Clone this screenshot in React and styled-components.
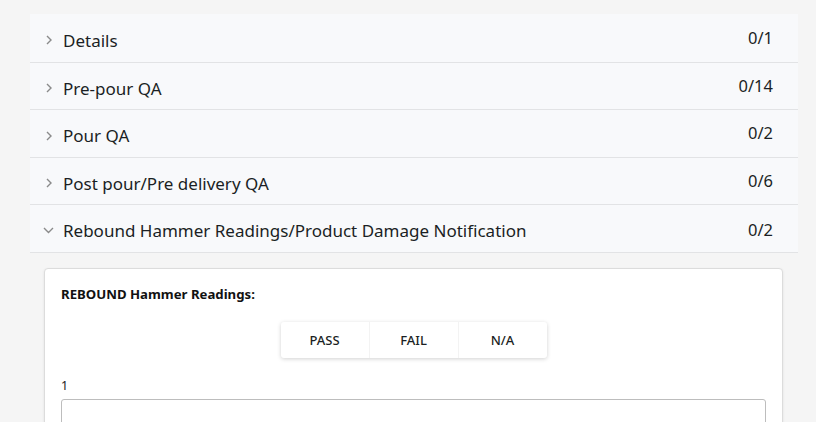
import React from "react";
import styled, { createGlobalStyle } from "styled-components";

const Global = createGlobalStyle`
  html, body { margin: 0; padding: 0; background: #f5f5f5; }
  body { font-family: "Noto Sans", "Open Sans", sans-serif; color: #1f2328; }
`;

const Page = styled.div`
  padding: 14px 18px 0 30px;
  height: 422px;
  box-sizing: border-box;
  overflow: hidden;
`;

const Accordion = styled.div`
  background: #f8f9fb;
`;

const Row = styled.div`
  display: flex;
  align-items: center;
  height: ${(p) => p.$h}px;
  border-bottom: 1px solid #e2e3e5;
  padding: 0 25px 0 15px;
  font-size: 17px;
  color: #1b1f24;
`;

const Chevron = styled.span`
  width: 18px;
  display: flex;
  align-items: center;
  margin-left: ${(p) => (p.$open ? "-2px" : "0")};
  margin-right: ${(p) => (p.$open ? "2px" : "0")};
  padding-top: ${(p) => (p.$open ? "2px" : "4px")};
  color: #8a8a8a;
`;

const Title = styled.span`
  flex: 1;
  padding-top: ${(p) => (p.$open ? "3px" : "4px")};
`;

const Count = styled.span`
  font-size: 16.5px;
  padding-top: ${(p) => (p.$open ? "1px" : "0")};
  margin-top: ${(p) => (p.$open ? "0" : "-2px")};
`;

const Body = styled.div`
  padding: 15px 15px 0 14px;
`;

const Card = styled.div`
  background: #fff;
  border: 1px solid #dcdcdc;
  border-radius: 4px;
  box-shadow: 0 1px 3px rgba(0, 0, 0, 0.08);
  padding: 16px 16px 20px 16px;
  height: 200px;
`;

const CardTitle = styled.div`
  font-weight: 700;
  font-size: 13.2px;
  color: #111;
`;

const ToggleGroup = styled.div`
  display: flex;
  justify-content: center;
  margin-top: 19px;
`;

const Toggles = styled.div`
  display: flex;
  background: #fff;
  border-radius: 3px;
  box-shadow: 0 1px 4px rgba(0, 0, 0, 0.18);
`;

const Toggle = styled.div`
  width: 88px;
  height: 36px;
  display: flex;
  align-items: center;
  justify-content: center;
  font-size: 13px;
  font-weight: 500;
  color: #1b1f24;
  border-left: ${(p) => (p.$first ? "none" : "1px solid #f3f3f3")};
`;

const FieldLabel = styled.div`
  margin-top: 19px;
  font-size: 12.5px;
  color: #222;
`;

const Input = styled.div`
  margin-top: 5px;
  height: 40px;
  border: 1px solid #bdbdbd;
  border-radius: 3px;
`;

const Right = () => (
  <svg width="8" height="10" viewBox="0 0 8 10">
    <path d="M2 1 L6 5 L2 9" fill="none" stroke="currentColor" strokeWidth="1.4" />
  </svg>
);

const Down = () => (
  <svg width="11" height="8" viewBox="0 0 11 8">
    <path d="M1 2 L5.5 6.5 L10 2" fill="none" stroke="currentColor" strokeWidth="1.4" />
  </svg>
);

const sections = [
  ["Details", "0/1", 48],
  ["Pre-pour QA", "0/14", 46],
  ["Pour QA", "0/2", 47],
  ["Post pour/Pre delivery QA", "0/6", 46],
];

export default function App() {
  return (
    <>
      <Global />
      <Page>
        <Accordion>
          {sections.map(([t, c, h]) => (
            <Row key={t} $h={h}>
              <Chevron><Right /></Chevron>
              <Title>{t}</Title>
              <Count>{c}</Count>
            </Row>
          ))}
          <Row $h={47}>
            <Chevron $open><Down /></Chevron>
            <Title $open>Rebound Hammer Readings/Product Damage Notification</Title>
            <Count $open>0/2</Count>
          </Row>
        </Accordion>
        <Body>
          <Card>
            <CardTitle>REBOUND Hammer Readings:</CardTitle>
            <ToggleGroup>
              <Toggles>
                <Toggle $first>PASS</Toggle>
                <Toggle>FAIL</Toggle>
                <Toggle>N/A</Toggle>
              </Toggles>
            </ToggleGroup>
            <FieldLabel>1</FieldLabel>
            <Input />
          </Card>
        </Body>
      </Page>
    </>
  );
}
